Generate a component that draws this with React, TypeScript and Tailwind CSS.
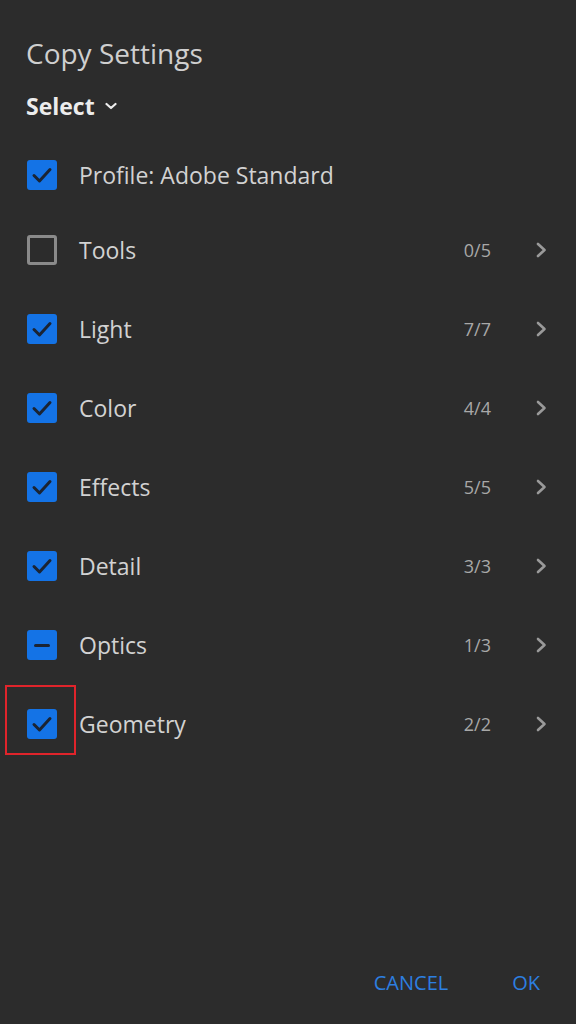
import React from "react";

type Row = { label: string; count?: string; state: "on" | "off" | "mixed"; highlight?: boolean };

const rows: Row[] = [
  { label: "Tools", count: "0/5", state: "off" },
  { label: "Light", count: "7/7", state: "on" },
  { label: "Color", count: "4/4", state: "on" },
  { label: "Effects", count: "5/5", state: "on" },
  { label: "Detail", count: "3/3", state: "on" },
  { label: "Optics", count: "1/3", state: "mixed" },
  { label: "Geometry", count: "2/2", state: "on", highlight: true },
];

function Box({ state }: { state: "on" | "off" | "mixed" }) {
  if (state === "off") {
    return <div className="w-[30px] h-[30px] rounded-[3px] border-[3px] border-[#8a8a8a]" />;
  }
  return (
    <div className="w-[30px] h-[30px] rounded-[3px] bg-[#1473e6] flex items-center justify-center">
      {state === "on" ? (
        <svg width="24" height="24" viewBox="0 0 24 24">
          <path d="M4 12.5 L9.5 18 L20 6.5" fill="none" stroke="#1b2433" strokeWidth="3" strokeLinecap="round" strokeLinejoin="round" />
        </svg>
      ) : (
        <div className="w-[16px] h-[3px] rounded-full bg-[#1b2433]" />
      )}
    </div>
  );
}

function Chevron() {
  return (
    <svg width="14" height="20" viewBox="0 0 14 20">
      <path d="M4 4 L10.5 10 L4 16" fill="none" stroke="#9a9a9a" strokeWidth="2.6" strokeLinecap="round" strokeLinejoin="round" />
    </svg>
  );
}

export default function App() {
  return (
    <div className="w-[576px] h-[1024px] bg-[#2c2c2c] flex flex-col" style={{ fontFamily: '"Open Sans", sans-serif' }}>
      <div className="pl-[26px] pt-[33px] text-[28px] leading-[40px] text-[#cfcfcf]">Copy Settings</div>
      <div className="pl-[26px] mt-[17px] flex items-center gap-[10px] text-[23px] leading-[32px] font-bold text-[#ececec]">
        <span>Select</span>
        <svg width="12" height="10" viewBox="0 0 12 10">
          <path d="M1.5 3 L6 7 L10.5 3" fill="none" stroke="#ececec" strokeWidth="2.2" strokeLinecap="round" strokeLinejoin="round" />
        </svg>
      </div>
      <div className="mt-[38px] h-[30px] flex items-center pl-[27px]">
        <Box state="on" />
        <span className="ml-[22px] text-[23px] text-[#d2d2d2]">Profile: Adobe Standard</span>
      </div>
      <div className="mt-[45px] flex flex-col gap-[49px]">
        {rows.map((r) => (
          <div key={r.label} className="h-[30px] flex items-center relative pl-[27px] pr-[28px]">
            {r.highlight && (
              <div className="absolute left-[5px] top-[-24px] w-[71px] h-[70px] border-2 border-[#e0242b]" />
            )}
            <Box state={r.state} />
            <span className="ml-[22px] text-[23px] text-[#d2d2d2] flex-1">{r.label}</span>
            <span className="text-[18px] text-[#a8a8a8] mr-[43px]">{r.count}</span>
            <Chevron />
          </div>
        ))}
      </div>
      <div className="mt-auto mb-[26px] flex justify-end items-center gap-[64px] pr-[36px] text-[20px] text-[#2d7fe0]">
        <span>CANCEL</span>
        <span>OK</span>
      </div>
    </div>
  );
}
